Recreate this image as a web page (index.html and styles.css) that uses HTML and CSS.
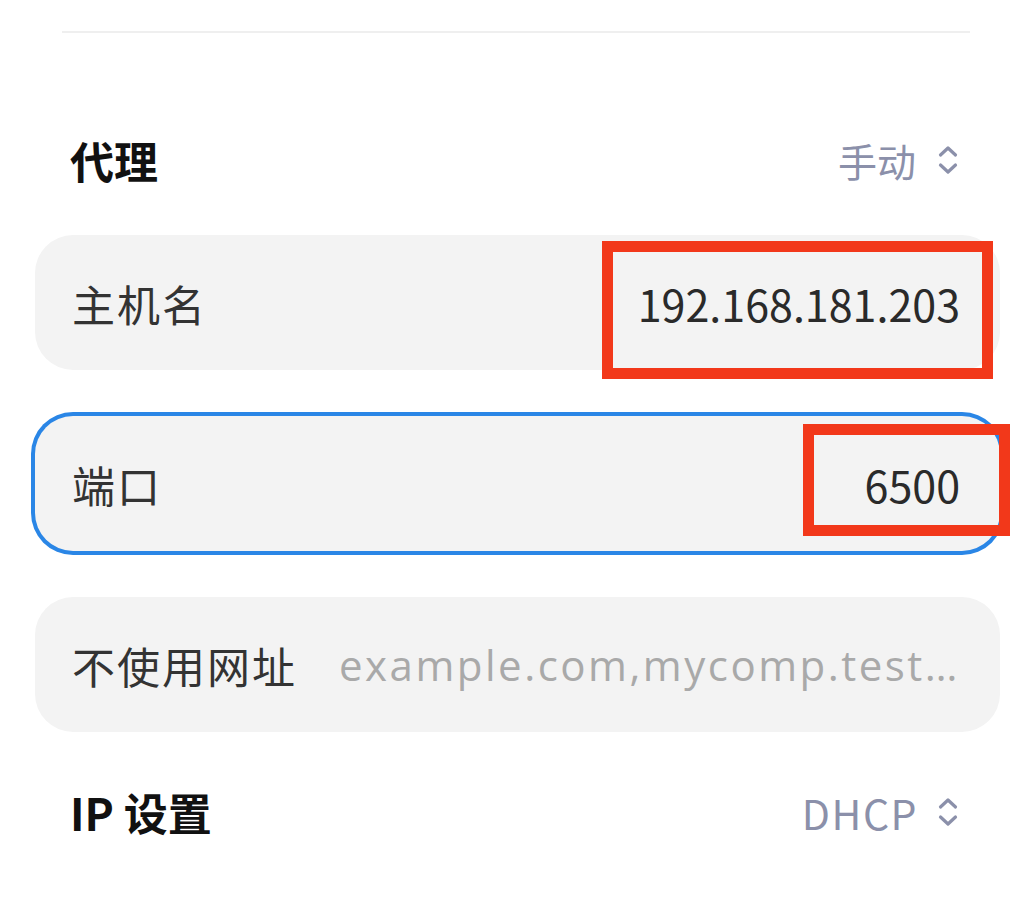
FILE: index.html
```html
<!DOCTYPE html>
<html lang="zh-CN">
<head>
  <meta charset="UTF-8">
  <title>代理设置</title>
  <link rel="stylesheet" href="styles.css">
</head>
<body>

  <div class="page">
    <div class="divider"></div>

    <!-- Proxy mode -->
    <div class="section-row">
      <span class="section-title">代理</span>
      <span class="picker">手动
        <svg class="updown" viewBox="0 0 20 30" width="20" height="30">
          <path d="M2.5 10 L10 3 L17.5 10" />
          <path d="M2.5 20 L10 27 L17.5 20" />
        </svg>
      </span>
    </div>

    <div class="field">
      <span class="field-label">主机名</span>
      <span class="field-value">192.168.181.203</span>
      <div class="mark mark-host"></div>
    </div>

    <div class="field focused">
      <span class="field-label">端口</span>
      <span class="field-value">6500</span>
      <div class="mark mark-port"></div>
    </div>

    <div class="field">
      <span class="field-label">不使用网址</span>
      <span class="field-hint">example.com,mycomp.test…</span>
    </div>

    <!-- IP settings -->
    <div class="section-row ip-row">
      <span class="section-title">IP 设置</span>
      <span class="picker picker-latin">DHCP
        <svg class="updown" viewBox="0 0 20 30" width="20" height="30">
          <path d="M2.5 10 L10 3 L17.5 10" />
          <path d="M2.5 20 L10 27 L17.5 20" />
        </svg>
      </span>
    </div>
  </div>

</body>
</html>
```

FILE: styles.css
```css
body {
  margin: 0;
  background: #fff;
  font-family: "Noto Sans CJK SC", "Noto Sans", sans-serif;
  color: #2a2a2a;
}

.page {
  padding: 0 24px 0 35px;
}

.divider {
  margin: 31px 30px 0 27px;
  height: 2px;
  background: #efefef;
}

.section-row {
  display: flex;
  justify-content: space-between;
  align-items: center;
  height: 80px;
  margin-top: 87px;
  padding: 0 42px 0 35px;
}

.section-title {
  font-size: 44px;
  font-weight: 700;
  color: #111;
}

.picker {
  display: flex;
  align-items: center;
  gap: 22px;
  font-size: 39px;
  color: #8b90aa;
}

.picker-latin {
  font-size: 41px;
  letter-spacing: 1.5px;
  gap: 20px;
}

.updown path {
  fill: none;
  stroke: #8b90aa;
  stroke-width: 3.2;
  stroke-linecap: round;
  stroke-linejoin: round;
}

.field {
  position: relative;
  display: flex;
  justify-content: space-between;
  align-items: center;
  height: 135px;
  margin-top: 46px;
  padding: 0 40px 0 37px;
  background: #f3f3f3;
  border-radius: 38px;
}

.section-row + .field {
  margin-top: 35px;
}

.field.focused {
  box-shadow: 0 0 0 4px #2a86e6;
}

.field-label {
  font-size: 43px;
  letter-spacing: 2px;
  color: #333;
}

.field-value {
  font-size: 43px;
  color: #2a2a2a;
}

.field-hint {
  font-family: "Open Sans", "Noto Sans", sans-serif;
  font-size: 42px;
  letter-spacing: 2.5px;
  color: #a9a9a9;
  white-space: nowrap;
}

/* red annotation boxes drawn on top of the screenshot */
.mark {
  position: absolute;
  border: 11px solid #f2381a;
  box-sizing: border-box;
}

.mark-host {
  left: 567px;
  top: 6px;
  width: 391px;
  height: 138px;
}

.mark-port {
  left: 768px;
  top: 8px;
  width: 207px;
  height: 112px;
}

.ip-row {
  margin-top: 40px;
}
```
